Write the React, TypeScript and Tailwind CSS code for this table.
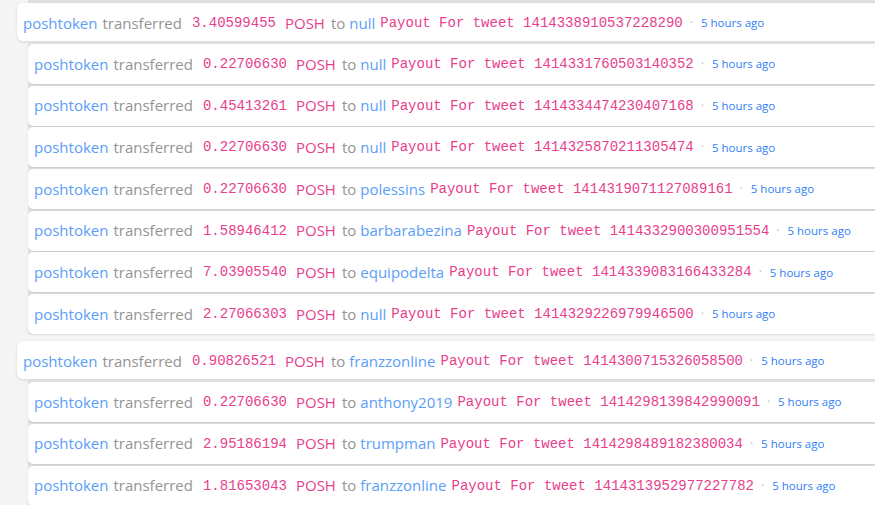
import React from "react";

type Row = { amount: string; to: string; tweet: string };

const group1Parent: Row = { amount: "3.40599455", to: "null", tweet: "1414338910537228290" };
const group1Children: Row[] = [
  { amount: "0.22706630", to: "null", tweet: "1414331760503140352" },
  { amount: "0.45413261", to: "null", tweet: "1414334474230407168" },
  { amount: "0.22706630", to: "null", tweet: "1414325870211305474" },
  { amount: "0.22706630", to: "polessins", tweet: "1414319071127089161" },
  { amount: "1.58946412", to: "barbarabezina", tweet: "1414332900300951554" },
  { amount: "7.03905540", to: "equipodelta", tweet: "1414339083166433284" },
  { amount: "2.27066303", to: "null", tweet: "1414329226979946500" },
];
const group2Parent: Row = { amount: "0.90826521", to: "franzzonline", tweet: "1414300715326058500" };
const group2Children: Row[] = [
  { amount: "0.22706630", to: "anthony2019", tweet: "1414298139842990091" },
  { amount: "2.95186194", to: "trumpman", tweet: "1414298489182380034" },
  { amount: "1.81653043", to: "franzzonline", tweet: "1414313952977227782" },
];

function Line({ r }: { r: Row }) {
  return (
    <div className="flex items-center whitespace-nowrap font-['Open_Sans',sans-serif] text-[15px] leading-none">
      <span className="text-[#5b9ef8]">poshtoken</span>
      <span className="ml-[5px] text-[#949494]">transferred</span>
      <span className="ml-[10px] font-['Liberation_Mono',monospace] text-[14px] text-[#e83e8c]">{r.amount}</span>
      <span className="ml-[9px] text-[#e83e8c] text-[15px]">POSH</span>
      <span className="ml-[6px] text-[#949494]">to</span>
      <span className="ml-[4px] text-[#5b9ef8]">{r.to}</span>
      <span className="ml-[5px] font-['Liberation_Mono',monospace] text-[14px] text-[#e83e8c]">
        Payout For tweet {r.tweet}
      </span>
      <span className="ml-[7px] text-[#c0c0c0] text-[12px]">·</span>
      <span className="ml-[8px] text-[#2f80f7] text-[11.5px]">5 hours ago</span>
    </div>
  );
}

function ParentCard({ r }: { r: Row }) {
  return (
    <div className="flex h-[38px] items-center rounded-l-[6px] bg-white pl-[6px] pt-[2px] shadow-[0_1px_3px_rgba(0,0,0,0.12)]">
      <Line r={r} />
    </div>
  );
}

function ChildCard({ r }: { r: Row }) {
  return (
    <div className="flex h-[40px] shrink-0 items-center rounded-l-[5px] bg-white pl-[6px] shadow-[0_1px_2px_rgba(0,0,0,0.10)]">
      <Line r={r} />
    </div>
  );
}

export default function App() {
  return (
    <div className="h-[505px] w-[875px] overflow-hidden bg-[#f4f4f4]">
      <div className="pl-[17px]">
        <div className="ml-[11px] h-[3px] bg-[#e0e0e0]" />
        <ParentCard r={group1Parent} />
        <div className="ml-[11px] flex flex-col gap-[1.7px] bg-[#e0e0e0] pt-[3px]">
          {group1Children.map((r, i) => (
            <ChildCard key={i} r={r} />
          ))}
        </div>
        <div className="h-[7px]" />
        <ParentCard r={group2Parent} />
        <div className="ml-[11px] flex flex-col gap-[1.7px] bg-[#e0e0e0] pt-[3px]">
          {group2Children.map((r, i) => (
            <ChildCard key={i} r={r} />
          ))}
        </div>
      </div>
    </div>
  );
}
